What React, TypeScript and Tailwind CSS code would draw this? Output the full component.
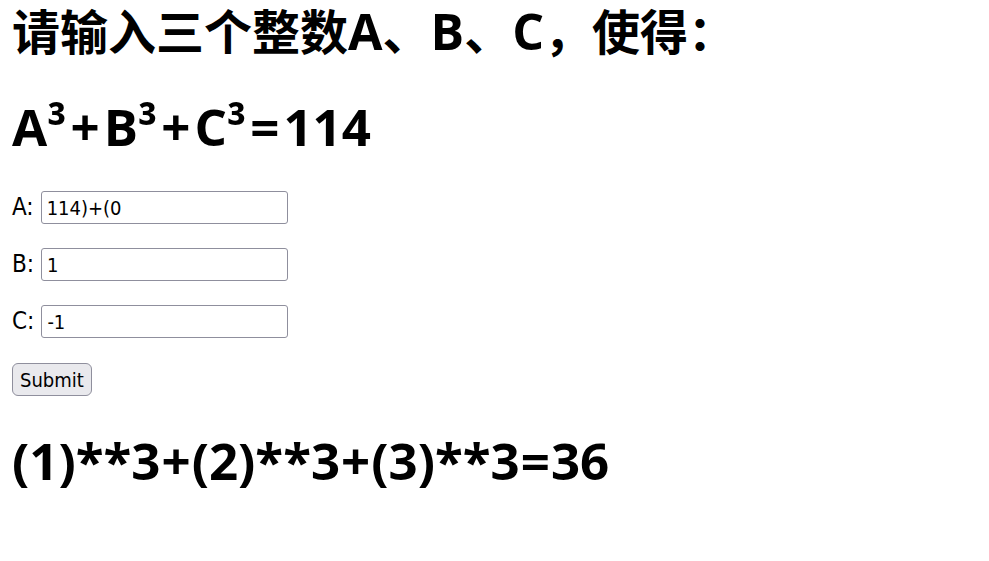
import { useState, type ReactNode } from "react";

const fields = [
  { name: "A", initial: "114)+(0" },
  { name: "B", initial: "1" },
  { name: "C", initial: "-1" },
];

const formula =
  "font-['Open_Sans','Noto_Sans',sans-serif] text-[51px] leading-[56px] font-bold";

function Latin({ children }: { children: ReactNode }) {
  return <span className="text-[50px] leading-none">{children}</span>;
}

function Op({ children }: { children: ReactNode }) {
  return <span className="mx-1">{children}</span>;
}

function Field({ name, initial }: { name: string; initial: string }) {
  const [value, setValue] = useState(initial);
  return (
    <div className="flex items-center gap-[7px]">
      <label htmlFor={name} className="pb-0.5 text-2xl leading-7">
        {name}:
      </label>
      <input
        id={name}
        name={name}
        type="text"
        value={value}
        onChange={(e) => setValue(e.target.value)}
        className="h-[33px] w-[247px] rounded-[3px] border border-[#8f8f9d] bg-white px-[5px] text-xl"
      />
    </div>
  );
}

export default function App() {
  return (
    <main className="bg-white px-3 font-['DejaVu_Sans_Condensed','Noto_Sans',sans-serif] text-black">
      <h1 className="font-['Open_Sans','Noto_Sans_CJK_SC',sans-serif] text-[48px] leading-[64px] font-bold">
        请输入三个整数<Latin>A</Latin>、<Latin>B</Latin>、<Latin>C</Latin>，使得：
      </h1>
      <h1 className={`${formula} mt-[34px]`}>
        A³<Op>+</Op>B³<Op>+</Op>C³<Op>=</Op>114
      </h1>
      <form className="mt-[37px] flex flex-col items-start gap-6" onSubmit={(e) => e.preventDefault()}>
        {fields.map((f) => (
          <Field key={f.name} {...f} />
        ))}
        <button
          type="submit"
          className="mt-px h-[33px] rounded-[6px] border border-[#8f8f9d] bg-[#e9e9ed] px-[7px] text-xl"
        >
          Submit
        </button>
      </form>
      <h1 className={`${formula} mt-9`}>
        (1)**3<span className="mx-px">+</span>(2)**3<span className="mx-px">+</span>(3)**3
        <span className="mx-px">=</span>36
      </h1>
    </main>
  );
}
